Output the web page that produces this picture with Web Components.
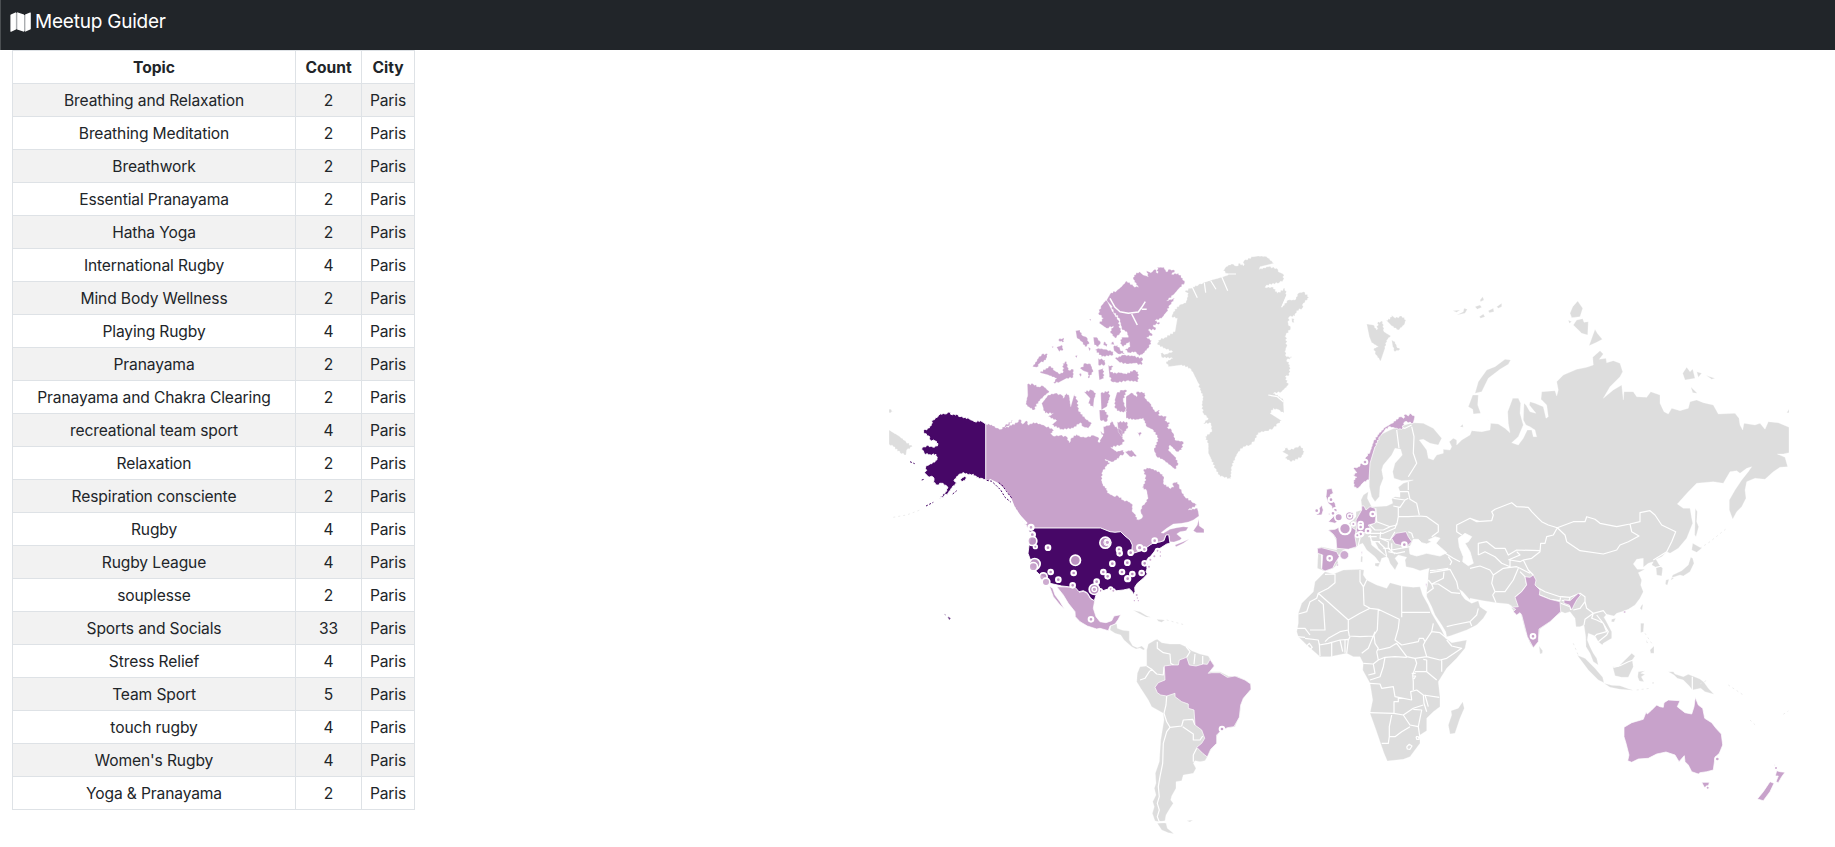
<!DOCTYPE html>
<html lang="en">
<head>
<meta charset="utf-8">
<title>Meetup Guider</title>
<style>
html,body{margin:0;height:100%;overflow:hidden;background:#fff}
body{font-family:Inter,"Liberation Sans",sans-serif;color:#212529;font-size:16px;line-height:24px}
</style>
</head>
<body>
<meetup-app></meetup-app>
<script>
class NavBar extends HTMLElement {
  constructor(){
    super();
    this.attachShadow({mode:'open'}).innerHTML = `<style>
:host{display:flex;align-items:flex-start;height:50px;box-sizing:border-box;background:#212529;color:#fff;border-left:1px solid #4b4f52;padding:7px 9px 0;font-size:20px;line-height:30px}
svg{width:21px;height:20px;margin:5px 4px 0 0;flex:none}
span{font-size:19px;letter-spacing:-.22px}
</style><svg viewBox="0 0 21 20"><path fill="#fff" d="M.4 3.3Q.4 2.8.9 2.5L6 .3V17.5L1.2 19.7Q.4 20 .4 19.2ZM7.1.3 14 2.6V19.8L7.1 17.5ZM15.1 2.6 20 .5Q20.8.2 20.8 1V16.8Q20.8 17.3 20.2 17.6L15.1 19.8Z"/><path stroke="#aaadb0" stroke-width="1.2" d="M6.5.8V17.2M14.6 3V19.2"/></svg><span><slot></slot></span>`;
  }
}
customElements.define('nav-bar', NavBar);

class TopicTable extends HTMLElement {
  constructor(){
    super();
    const rows = [['Breathing and Relaxation',2],['Breathing Meditation',2],['Breathwork',2],['Essential Pranayama',2],['Hatha Yoga',2],['International Rugby',4],['Mind Body Wellness',2],['Playing Rugby',4],['Pranayama',2],['Pranayama and Chakra Clearing',2],['recreational team sport',4],['Relaxation',2],['Respiration consciente',2],['Rugby',4],['Rugby League',4],['souplesse',2],['Sports and Socials',33],['Stress Relief',4],['Team Sport',5],['touch rugby',4],["Women's Rugby",4],['Yoga &amp; Pranayama',2]];
    this.attachShadow({mode:'open'}).innerHTML = `<style>
:host{display:block}
table{border-collapse:collapse;table-layout:fixed;width:403px;text-align:center}
th,td{border:1px solid #dee2e6;padding:5px 0 3px;height:24px;line-height:24px;font-size:15.6px;letter-spacing:-.13px;white-space:nowrap}
th{font-weight:700;font-size:15.6px;letter-spacing:0}
tbody tr:nth-child(odd){background:#f2f2f2}
</style><table><colgroup><col style="width:283px"><col style="width:66px"><col style="width:53px"></colgroup>
<thead><tr><th>Topic</th><th>Count</th><th>City</th></tr></thead>
<tbody>${rows.map(r=>`<tr><td>${r[0]}</td><td>${r[1]}</td><td>Paris</td></tr>`).join('')}</tbody></table>`;
  }
}
customElements.define('topic-table', TopicTable);

/* Map outlines are lists of points in thirds of a pixel, relative to a named sheet. */
const SHEETS = {N:[880,250],G:[1140,250],U:[1000,500],S:[1120,630],E:[1280,400],F:[1280,560],R:[1440,270],C:[1470,480],O:[1560,650]};
/* Arctic coasts (sheets N and G) get small fjords between their points. */
function trace(text, close){
  let o = [0,0], sheet = '';
  return text.trim().split(';').map(part=>{
    const pts = [];
    let last = null;
    for (const t of part.trim().split(/\s+/)) {
      if (SHEETS[t]) { o = SHEETS[t]; sheet = t; continue; }
      const [px,py] = t.split(',').map(Number), x = o[0]+px/3, y = o[1]+py/3;
      const rough = close && (sheet==='N' || sheet==='G');
      if (last && rough && last[2]) {
        const dx = x-last[0], dy = y-last[1], len = Math.hypot(dx,dy);
        if (len > 3.2 && len < 13) {
          const n = Math.round(len/1.6);
          for (let i=1;i<n;i++) {
            const h = Math.sin((x*12.9+y*78.2+i*37.7))*1.0*(i%2?1:-1)*.75, f=i/n;
            pts.push((last[0]+dx*f-dy/len*h).toFixed(1)+' '+(last[1]+dy*f+dx/len*h).toFixed(1));
          }
        }
      }
      pts.push(x.toFixed(1)+' '+y.toFixed(1));
      last = [x,y,rough];
    }
    return 'M'+pts.join('L')+(close?'Z':'');
  }).join('');
}
const LAND = `
G 355,18 380,20 402,40 360,50 358,58 385,50 410,55 415,65 430,72 430,90 418,98 380,105 375,112 400,112 412,130 435,115 440,135 425,172 445,150 465,150 475,130 490,125 508,142 490,160 487,175 470,182 465,198 448,200 445,220 452,235 438,255 440,290 435,305 440,320 457,322 440,330 450,345 448,375 436,380 445,405 425,425 400,430 420,440 430,450 432,490 415,480 400,475 390,490 425,512 415,520 400,535 380,543 355,548 345,570 330,585 310,590 295,605 285,625 275,650 272,688 250,680 240,680 225,655 215,630 205,610 205,580 195,560 215,545 213,520 190,520 205,505 190,490 185,465 190,440 180,420 175,400 160,370 150,355 125,345 85,350 78,335 98,325 65,322 62,310 78,312 98,305 75,295 53,285 55,270 75,262 105,245 112,205 95,200 100,185 118,165 138,158 145,130 135,125 150,115 175,105 190,98 215,90 250,80 265,75 250,62 258,50 275,42 290,48 300,40 310,48 312,32 340,20;
427,605 435,600 432,590 450,600 470,592 482,587 493,605 485,620 455,635 435,625 445,615;
680,222 700,225 710,240 715,215 728,215 732,245 752,258 740,270 735,295 722,333 705,310 702,295 715,290 695,278 688,260;
738,210 750,208 755,195 765,205 785,198 798,210 792,225 775,240 755,228;
755,270 765,275 770,290 780,298 765,305 758,290;
455,205 463,207 463,218 456,217;
N 27,540 60,560 78,575 97,590 80,600 78,615 60,608 40,590 27,582;27,478 42,483 27,488;
U 330,390 333,377 350,371 352,385 368,391 388,393 388,420 398,437 412,443 425,438 435,447 430,450 420,444 408,447 395,440 372,420 362,405 345,400;
400,331 420,335 440,347 452,352 438,351 420,342;470,358 495,360 485,367 475,364;
S 80,60 85,42 105,30 112,28 125,38 150,42 180,42 198,50 215,62 240,72 265,78 275,95 283,105 270,125 300,125 325,138 350,138 375,150 392,162 393,178 370,205 362,225 360,255 345,290 325,293 300,300 290,320 290,340 272,360 262,380 255,392 240,395 225,392 220,400 228,415 220,430 190,435 185,452 168,455 168,475 155,498 152,510 160,520 150,535 138,555 135,572 118,575 105,573 97,550 103,530 98,515 108,495 103,475 108,460 106,430 118,395 122,330 132,270 130,250 95,230 85,210 62,175 50,155 52,130 60,110 80,108;
112,580 138,578 142,595 162,611 145,608 125,600;
200,572 218,570 210,576;
E 400,68 430,70 460,85 485,115 475,135 450,130 430,118 418,120 440,150 445,175 460,180 470,165 490,160 490,148 510,150 515,140 508,125 520,115 530,120 530,135 545,120 570,105
R 95,482 125,485 150,480 152,460 175,462 195,475 210,488 205,460 203,425 218,385 235,385 242,400 240,430 250,465 235,500 215,518 235,525 250,505 262,480 275,480 280,500 290,500 285,480 270,470 258,465 250,450 252,400 258,405 270,425 288,430 268,405 270,395 285,400 310,410 318,445 325,440 320,405 303,388 305,365 345,362 350,378 355,360 350,335 370,315 410,298 440,292 460,285 458,262 480,242 490,252 478,268 498,265 500,278 520,272 540,280 548,305 540,320 510,350 490,385 520,360 545,345 550,390 552,365 580,365 590,380 620,382 632,365 660,375 660,400 672,425 685,432 695,415 720,422 745,415 750,395 770,390 790,398 820,405 835,432 885,430 897,445 900,465 908,480 912,460 945,465 960,460 975,478 985,455 1015,458 1047,472 1047,548 1030,552 1012,552 1035,562 1043,590 1020,592 1000,605 975,628 945,625 920,635 915,660 918,685 905,710 890,725 878,748 868,720 868,690 885,660 905,630 925,605 935,590 920,595 900,610 890,602 870,605 850,640 820,635 770,640 745,665 712,702 730,715 750,715 755,745
C 668,130 650,175 625,205 600,220 590,215 575,230 558,238 568,255 578,265 575,288 560,285 558,262 545,255 550,245 535,250 520,262 520,235 500,238 490,252 502,268 525,268 505,278 515,300 512,315 520,335 510,355 495,375 475,388 455,395 440,400 432,408 410,403 402,412 412,430 425,455 425,475 400,490 397,495 385,485 375,468 355,460 352,480 360,500 370,520 380,535 385,555 370,545 360,520 348,500 347,470 342,435 330,440 318,440 315,415 300,395 285,400 275,395 255,410 240,425 210,447 205,480 190,503 180,490 165,450 155,410 152,395 140,405 125,385 125,378 115,372 78,368 40,362 0,355
F 570,120 548,95 538,88 545,105 555,118 575,130 595,122 600,140 622,155 610,175 590,195 560,210 510,228 500,230 497,215 485,195 465,165 455,140 440,110 440,90 443,70
E 445,520 448,505 420,512 400,505 378,500 375,480 380,472 355,465 345,475 355,490 345,510 330,490 325,475 310,460 295,445 285,425 272,420 275,435 300,455 320,470 305,475 300,490 285,470 260,450 248,430 235,435 225,445 205,445 190,450 170,475 175,490 160,505 140,512 130,513 125,510 112,505 113,480 115,455 112,445 125,440 170,450 168,420 160,405 145,390 165,388 185,378 205,372 228,350 228,335 245,330 245,318 243,300 250,285 265,275 262,295 275,320 285,320 320,318 338,310 335,297 345,290 360,292 360,275 355,262 370,250 400,240 365,242 342,235 338,215 345,190 367,165 362,148 345,145 335,165 310,195 305,210 310,235 300,260 298,290 285,305 275,290 268,260 268,190 285,140 300,105 330,90 355,80;
285,490 300,488 295,500 285,497;243,468 248,470 247,487 242,485;
F 135,35 160,42 190,30 240,28 252,30 250,45 260,60 290,75 320,85 330,68 365,78 400,82 420,80 428,105 445,135 455,160 470,185 485,210 497,235 515,248 560,240 555,265 530,295 500,325 475,365 480,410 480,440 460,455 440,475 440,512 420,525 420,550 390,590 370,598 322,603 312,580 300,545 288,510 270,460 278,420 270,370 248,330 250,310 240,290 220,290 200,280 150,290 120,290 80,255 55,230 50,215 55,190 55,160 65,130 100,95 105,65;
548,425 553,445 540,475 525,520 510,522 505,495 515,465 513,452 535,445;
C 207,498 218,512 217,520 210,522;425,418 437,415 432,426 424,425;515,375 519,373 516,391 510,385;512,430 522,430 520,455 512,458;540,510 552,498 552,520 542,520;528,480 535,490 530,488;676,85 682,95 680,125 686,140 678,170 674,165;668,190 695,205 680,217 665,210;662,232 668,235 672,250 660,275 640,288 630,285 605,293 608,285 635,272 655,255;588,300 597,298 592,316 586,312;605,293 612,295 602,301;
322,526 345,535 375,565 398,592 402,608 385,600 355,570;402,610 425,616 450,617 475,626 490,631 450,628 420,622;428,560 445,560 455,550 475,530 485,520 495,528 487,540 490,560 475,592 455,592 435,587;505,575 525,572 512,580 525,583 514,590 522,605 508,603 503,590;595,575 610,575 615,582 640,590 655,583 690,597 702,607 715,625 732,643 705,635 692,625 667,630 658,618 640,600 622,595 612,585;545,608 552,606 550,612;
R 212,270 205,283 180,298 145,325 125,365 105,370 115,335 140,300 165,290 195,268;98,375 115,375 113,405 122,430 100,432 98,418 85,410;390,130 398,110 413,93 428,115 420,140 395,143;385,150 395,155 388,160;400,165 410,150 428,146 432,157 445,155 443,195 425,190;465,178 472,190 487,208 470,217 447,227;728,310 740,292 750,305 758,297 765,325 735,330;770,305 785,310 775,322;798,316 810,320 825,325 815,328;752,350 772,370 758,368;
38,122 60,120 50,127;50,135 70,125 72,115 82,118 75,130;105,110 120,105 125,112 112,118;120,90 128,80 132,90 122,95;145,122 160,115 162,125 148,128;170,110 185,100 185,110 175,115;118,140 130,132 135,140 122,145;60,470 68,463 70,472;138,445 150,455 146,452;1040,428 1047,418 1047,428`;
const BORDERS = `
S 112,35 112,55 130,68 150,72 152,100 165,108;60,150 75,145 88,125 95,118;80,108 95,118 110,132 130,135 132,110;140,198 138,225 132,250 140,275 150,292;150,292 140,305 130,340 128,400 120,440 115,470 118,500 112,520 118,540 112,560 118,575 138,578;150,292 185,288 190,270 218,268 225,285;188,290 220,312 220,330 240,330 248,318;230,355 220,375 220,395;198,50 210,65 200,82;225,72 222,103;248,78 248,103;
F 135,43 165,42 165,68 145,85 115,100 110,115 90,125 80,155 55,162;115,100 205,180 240,160 270,145 252,135 250,80 240,65 240,30;250,82 260,60;365,78 365,172;365,157 450,157;270,145 295,148 358,178 355,205 345,240 365,255 415,245 418,235 430,235 435,245 455,215 460,190;295,148 292,210 282,225 285,250 295,265 290,275;115,120 130,133 135,210 90,210;205,180 205,210 180,215 145,235 135,245;50,205 75,205 90,225;50,230 75,232;205,212 208,228 240,230 280,228 285,215;200,280 205,240 210,230;180,240 188,275;155,245 155,290;118,250 120,288;195,240 195,278;75,235 115,240 118,255 145,250 180,240 205,238;280,228 265,265 245,280;290,275 295,300 280,312;295,270 330,262 350,250 380,290 405,295 440,290 430,255 435,245;295,300 315,292 345,290 380,292;250,310 280,312 285,340 265,345;315,292 310,320 300,350 270,360;440,290 480,300 500,295 545,265 515,258 500,240;455,215 480,218 500,235;485,300 485,335;405,335 440,335 470,360;430,298 440,300 440,335;405,295 410,310 398,345 400,365 400,390;270,370 300,372 305,385 340,380 345,410 395,420 392,395 410,390 430,405 478,412;355,412 355,425 342,425 342,460 268,458;430,405 432,430 440,455;435,405 445,440;342,460 370,465 400,445 430,435;370,465 390,495 415,500 425,450 400,448;335,465 328,500 328,530 345,530 365,515 390,500;328,530 325,550 305,550;415,500 420,535;380,560 388,553 396,558 390,568 382,567 380,560;408,530 415,530 418,538 410,538 408,530;395,340 407,340;398,348 407,348 402,357;80,258 88,250 97,262 88,270;
440,100 460,85 455,72 490,55 492,35;455,72 475,72 515,98 540,100;445,60 455,72;450,38 470,35 510,28 530,65 535,88;500,200 520,195 570,185 590,165 595,145;570,185 575,198;
E 350,90 357,145;355,80 375,85 395,75;395,80 402,110 400,160 410,190 385,230;385,245 385,270;340,295 375,300 385,295;360,275 385,275 390,298 410,310 418,345;340,318 360,322 375,300;355,320 355,350 385,350 418,348 440,350 475,375 475,395 455,410;287,325 290,365 330,380 350,375 355,350;290,365 270,375 285,390 310,390 330,380;350,370 345,385 310,400 265,400;302,395 300,415 330,420 345,395;265,410 290,410;270,405 275,425 300,425;300,415 325,425 325,445 345,462;295,425 315,445 320,470;335,430 335,450 390,440;325,455 350,460 375,455;310,445 330,445;125,460 125,505;600,365 570,355 530,375 530,395 545,405;480,450 520,475 540,485;505,470 515,485 510,495;450,512 470,510 505,505;385,395 395,400 400,415;230,400 240,415 235,435;
C 0,115 20,125 65,122 70,105 65,95 75,88 125,68 140,80 175,82 185,95 205,115 215,125 235,135 262,143 250,165 230,170 225,190 212,190 210,215 185,235 160,240 175,270 190,285;262,143 310,125 345,125 350,110 375,118 390,130 440,140 480,132 485,155 507,168 475,185 450,195 440,210 400,222 330,212 290,185 285,165 262,143;480,132 510,125 510,98 540,92 555,105 575,135 617,155 605,185 590,215 550,240;198,320 225,335 270,350 300,352 330,340 345,350 345,365 350,385 370,400 400,392 410,405;25,225 25,190 50,185 75,205 105,205 115,225 140,210 210,212;25,225 45,215 75,230 95,250 120,260;0,265 30,258 60,270 70,285 100,265 120,262 140,260 150,265 160,270 180,280;70,285 65,310 75,335 105,335 130,300 145,265;75,335 68,345 78,368;120,260 120,240 150,245 160,240;115,240 150,225 140,215;135,352 155,335 170,315 165,290 150,275;210,345 240,358 270,362 272,350;275,350 300,352 298,360 275,362;272,370 300,380 302,390;345,365 330,385 310,390;370,400 345,418 342,435;370,400 365,415 380,420 400,430 410,455 380,463 375,468;380,405 400,430;400,430 415,455 410,465 385,485;667,590 667,632;430,562 450,557 475,545 490,540;558,262 575,258;
G 155,108 172,143;193,98 197,128;212,92 228,118;245,80 263,122;450,115 425,172;262,72 288,72;385,435 412,440 430,455;395,490 415,480 425,498`;
const SEAS = `E 388,445 400,418 415,418 425,428 440,432 455,425 445,420 465,410 480,415 468,430 485,445 500,458 480,468 440,460 410,468 390,462;535,415 555,400 575,410 565,425 555,430 570,455 580,490 565,497 548,485 550,470 538,440`;
const CANADA = `
N 317,522 335,524 350,534 362,538 375,527 400,510 385,528 375,534 395,526 410,518 420,508 428,522 440,512 446,526 460,517 480,521 495,528 515,535 522,542 512,550 520,558 540,556 560,560 568,578 575,563 590,553 600,560 620,562 640,556 655,562 657,578 662,565 668,555 660,545 672,550 670,530 690,525 695,510 705,530 725,540 728,562 733,575 722,585 692,592 710,605 730,600 732,612 718,620 710,630 695,636 675,628 690,638 680,648 668,665 664,690 670,708 680,715 682,728 700,738 715,738 730,750 745,755 757,762 757,785 768,795 770,808 780,808 788,800 782,785 785,770 800,755 803,740 800,722 785,712 795,700 797,680 790,662 800,653 820,657 840,668 852,680 850,700 868,714 880,712 878,700 892,695 898,710 905,725 915,740 935,755 952,765 925,780 952,775
U 595,35 597,48 580,60 565,66 545,70 520,72 500,85 483,98 490,100 510,88 530,83 550,80 565,82 558,92 540,95 530,102 545,115 540,120 522,126 508,125 508,108 498,105 490,122 475,127 460,130 450,135 430,150 412,155 400,160 395,155 397,135 390,120 375,108 362,95 345,97 330,95 302,84 85,84
N 445,834 430,815 415,790 400,765 390,745 375,725 358,705 340,695 317,689;
U 580,92 592,75 596,58 598,78 612,88 612,98 590,98;525,135 550,125 568,117 550,130 528,140;
N 680,150 693,128 710,122 722,112 740,93 760,108 775,112 760,88 762,75 778,65 790,75 805,80 800,62 812,68 825,58 833,70 832,52 852,52 858,65 870,58 885,62 875,73 895,70 908,85 914,98 900,112 880,135 860,152 885,145 870,165 860,185 845,205 825,212 840,220 820,225 828,238 805,240 818,255 800,262 815,272 808,290 790,310 778,318 765,305 748,308 735,300 750,290 748,275 730,290 720,280 725,262 745,262 740,245 720,235 715,210 705,195 695,180;
678,150 662,170 655,190 670,205 658,220 680,235 700,228 690,245 705,265 720,250 725,235 718,205 700,185 692,165;
640,262 650,262 662,278 655,290 643,285;587,242 600,240 605,255 620,262 628,282 615,290 605,275 590,262;535,270 550,263 552,275 540,275;530,292 545,285 550,298 538,305;628,208 633,207 632,213;
672,275 682,282 680,290 670,285;700,290 712,285 720,298 735,310 715,312 702,302;690,282 700,275 703,284;585,318 592,316 590,324;597,372 603,370 602,380;625,290 632,296 628,304;515,290 520,289 519,295;
458,350 475,325 485,313 503,312 498,330 480,340 470,352;480,368 498,355 512,348 525,362 540,372 550,365 548,340 560,335 565,360 580,358 580,382 560,385 535,398 520,398 530,385 505,375;600,355 610,350 612,340 632,342 640,365 625,385 625,368 610,362;655,325 675,330 675,345 655,345;655,360 670,355 672,385 658,390;685,345 700,350 690,362 700,370 720,368 740,372 760,360 775,365 775,395 740,392 715,398 695,395 688,375;705,325 730,315 760,318 788,325 785,345 765,340 740,342 720,338;655,295 675,298 700,305 700,315 665,320 645,300;
442,403 460,402 475,410 490,408 508,425 490,440 475,455 462,480 450,475 437,463 443,435;485,460 505,435 525,430 545,435 550,445 560,428 568,440 572,470 583,432 592,450 595,480 615,505 635,520 625,535 610,530 600,518 580,535 545,538 515,525 530,512 505,500 520,490 495,490 490,475;612,425 635,420 648,430 642,450 640,473 625,460 630,445;662,430 685,422 690,440 680,470 664,480;658,480 675,480 685,500 680,515 660,510;
710,430 725,420 740,420 730,450 735,470 740,485 720,487 705,475 704,450;738,440 755,428 770,440 770,425 795,428 795,445 810,460 825,485 840,480 835,495 860,500 855,512 870,520 862,532 875,540 880,550 885,570 910,575 905,600 890,605 870,585 865,600 885,620 895,640 885,658 870,645 850,630 830,620 822,600 835,565 820,540 800,530 790,505 765,510 738,505 738,465;735,605 755,600 770,618 750,620;712,515 740,515 745,530 725,560 715,545;772,545 785,550 780,560`;
const USA = `
N 317,522 302,512 285,515 268,507 255,502 240,500 230,493 218,494 205,486 195,492 180,491 172,502 158,510 154,522 148,534 131,541 133,551 147,558 150,570 165,573 174,581 172,588 158,591 148,590 145,586 132,590 120,599 130,602 133,611 150,614 168,613 171,625 165,636 150,641 137,650 140,661 133,668 145,680 158,680 162,690 160,698 172,705 184,700 198,706 204,714 196,726 176,747 192,738 205,728 217,712 230,700 222,692 236,674 252,668 264,675 280,673 290,683 302,685 317,689;241,688 256,677 262,685 246,697;
U 85,84 302,84 330,95 345,97 362,95 375,108 390,120 397,135 395,155 400,160 430,150 450,135 462,128 480,126 492,122 498,105 506,104 510,130 500,132 480,145 468,148 455,165 440,180 445,195 438,215 442,222 430,235 412,250 404,262 405,275 400,285 398,276 388,266 370,270 350,272 330,265 315,270 300,275 288,285 283,302 272,295 262,278 250,272 237,275 225,262 205,260 185,258 150,250 142,238 120,225 110,215 95,190 84,160 88,130 92,110`;
const LIGHT = `
U 170,260 228,262 238,277 250,274 262,280 272,297 284,302 280,325 288,350 300,365 318,368 335,362 342,348 362,344 355,358 345,372 330,378 325,392 300,385 290,387 262,378 240,365 226,350 225,335 205,310 190,285;148,258 158,265 165,285 180,305 193,327 180,315 160,290;
S 133,108 155,105 175,105 178,90 200,82 208,105 228,108 250,102 262,103 270,88 283,108 265,130 275,128 300,128 322,142 345,138 375,150 392,162 393,178 370,205 362,225 358,262 342,290 322,293 300,305 290,315 290,340 272,358 262,381 248,370 230,352 245,340 254,325 245,300 225,285 222,240 205,235 205,222 185,215 165,200 165,190 140,198 122,195 112,188 105,172 115,158 135,150;
G 640,655 655,650 665,640 675,635 678,620 690,605 700,575 712,555 735,532 755,520 780,500 790,505 795,492 805,498 810,490 825,500 820,520 795,515 785,538 765,535 750,530 735,540 720,560 705,590 690,640 687,690 672,695 655,715 643,712 640,690 650,682 638,675 650,668;
E 112,445 125,443 170,455 178,470 165,490 158,505 135,513 125,508 128,465 113,460;145,390 165,388 180,380 190,372 205,375 228,390 225,410 230,440 205,448 170,445 168,415 160,403;245,330 245,318 252,318 258,330 270,320 285,325 288,345 285,370 265,375 275,392 245,400 230,395 228,360;230,400 240,395 255,400 245,412 230,410;108,325 118,325 125,315 130,330 125,345 110,345;140,268 155,265 160,280 150,285 165,310 170,330 185,355 165,370 145,365 160,350 145,342 158,335 155,318 145,310 138,290;335,415 348,400 378,395 385,410 395,425 380,440 345,432;243,455 247,455 246,465;437,551 441,550 439,567;
C 165,290 180,292 190,285 198,300 195,315 210,330 208,345 240,358 270,365 272,395 240,425 207,447 205,485 190,503 172,470 155,405 150,398 140,405 130,395 137,388 125,382 145,380 135,352 155,335 170,315;282,360 300,362 325,340 332,345 320,360 312,375 305,390 298,375 282,370;461,393 467,393 467,399 461,399;
O 192,232 215,218 250,208 258,187 262,192 275,180 290,165 300,170 310,172 312,158 325,150 360,152 352,170 375,188 395,192 402,170 406,142 415,165 428,175 434,205 455,218 468,235 484,252 488,285 478,310 465,322 460,360 440,365 420,368 415,372 395,365 385,345 375,335 373,317 357,335 345,315 318,306 290,312 265,325 235,327 215,337 203,332 207,315 198,280 192,260;425,397 448,397 445,410 433,412;650,362 660,365 675,367 665,380 655,398 648,395 655,378 646,378;630,395 642,400 630,425 610,452 592,447 610,425;642,343 646,345 644,347`;
const INLETS = `N 690,145 705,172 720,185 745,190 775,186 785,172 796,155;755,192 772,225;785,178 800,178;668,555 655,575`;
/* sheet, x, y, inner radius, white ring width (in thirds of a pixel) */
const PINS = `U 144,143 4 6;357,149 4 6;359,160 4 6;392,158 4 6;337,191 4 6;382,188 4 6;366,216 4 6;397,222 4 6;425,219 4 6;383,236 4 7;310,216 4 6;323,229 4 6;290,245 4 6;221,219 4 6;152,216 4 6;175,239 4 6;218,256 4 6;273,358 4 6;332,267 3 5;340,272 3 4;301,272 3 5;106,140 3 5;93,82 4 7;97,104 4 7;97,123 11 5;104,192 14 5;100,200 10 5;130,230 9 5;138,246 9 5;226,181 13 5;316,128 14 5;322,127 9 3;322,127 5 4;283,268 13 5;283,268 5 4;419,143 5 6;433,148 4 5;464,122 4 6;463,169 3 6;451,179 3 6;473,152 3 6;481,156 2 5;481,168 2 5;434,190 4 6;447,200 3 5;410,285 3 5;403,302 2 4;415,302 2 4;412,294 2 4;
S 306,297 4 6;
E 255,186 4 6;153,299 4 6;166,331 4 6;159,340 4 6;176,352 9 5;110,332 4 6;209,348 11 5;209,348 4 4;195,386 14 6;278,342 4 6;242,372 4 6;242,381 4 6;264,393 4 6;242,402 4 6;232,406 3 5;220,372 3 5;149,475 4 6;193,465 12 2;373,434 4 6;216,340 2 3;172,495 2 2;
C 189,469 4 6;O 472,327 4 5;443,413 3 4;648,354 3 4`;
class WorldMap extends HTMLElement {
  constructor(){
    super();
    let o;
    const pins = PINS.trim().split(';').map(p=>{
      let t = p.trim().split(/\s+/);
      if (SHEETS[t[0]]) o = SHEETS[t.shift()];
      const [x,y] = t[0].split(',').map(Number), r=+t[1]/3, w=+t[2]/3;
      return `<circle cx="${o[0]+x/3}" cy="${o[1]+y/3}" r="${r+w/2}" stroke-width="${w}"/>`;
    }).join('');
    this.attachShadow({mode:'open'}).innerHTML = `<style>
:host{display:block;overflow:hidden}svg{display:block;width:955px;height:797px}
path{stroke:#fff;stroke-width:.7;stroke-linejoin:round}
.land{fill:#ddd;stroke-width:.3}.line{fill:none;stroke-width:1.2}.inlet{fill:none;stroke-width:1.5}
.sea{fill:#fff}.light{fill:#c8a2cb}.arctic{stroke-width:.3}.dark{fill:#470767;stroke-width:.9}
.pins{fill:#c8a2cb;fill-opacity:.9;stroke:#fff}
.isles{stroke:#470767;stroke-width:1;stroke-dasharray:2 1.6;fill:none}
.faint{stroke:#e9e9e9;stroke-width:.8;stroke-dasharray:2 3;fill:none}
</style><svg viewBox="880 50 955 797">
<path class="land" d="${trace(LAND,true)}"/><path class="sea" d="${trace(SEAS,true)}"/><path class="line" d="${trace(BORDERS,false)}"/>
<path class="light arctic" d="${trace(CANADA,true)}"/><path class="light" d="${trace(LIGHT,true)}"/><path class="inlet" d="${trace(INLETS,false)}"/>
<path class="dark" d="${trace(USA,true)}"/>
<path class="inlet" style="stroke-width:2.6" d="${trace('N 328,690 352,702 375,722 392,750 402,775 420,800 440,822',false)}"/>
<path class="isles" d="${trace('N 320,691 335,694 348,706 362,720 375,742 392,756;N 356,698 366,705 380,725 396,745;N 138,768 160,757;N 90,635 104,641;N 125,690 132,688;N 218,732 230,722',false)}"/>
<path d="M944.5 614.4l1.4.7M948 617l2.3 1.2-.9 1.4z" style="stroke:#8d6aa0;fill:#470767"/>
<path class="faint" d="${trace('N 40,802 80,795 120,780;C 690,205 720,185 770,145;C 525,460 545,490;C 310,490 325,526;C 500,630 540,625;O 505,105 550,135;O 570,210 588,227;O 670,193 685,183;U 500,360 555,375;C 690,612 712,600',false)}"/>
<g class="pins">${pins}</g></svg>`;
  }
}
customElements.define('world-map', WorldMap);

class MeetupApp extends HTMLElement {
  constructor(){
    super();
    this.attachShadow({mode:'open'}).innerHTML = `<style>
:host{display:flex;flex-direction:column;height:847px;overflow:hidden}
nav-bar{flex:none}
main{display:flex;justify-content:space-between;flex:1;min-height:0;padding-left:12px}
world-map{flex:none;width:955px}
</style><nav-bar>Meetup Guider</nav-bar><main><topic-table></topic-table><world-map></world-map></main>`;
  }
}
customElements.define('meetup-app', MeetupApp);
</script>
</body>
</html>
